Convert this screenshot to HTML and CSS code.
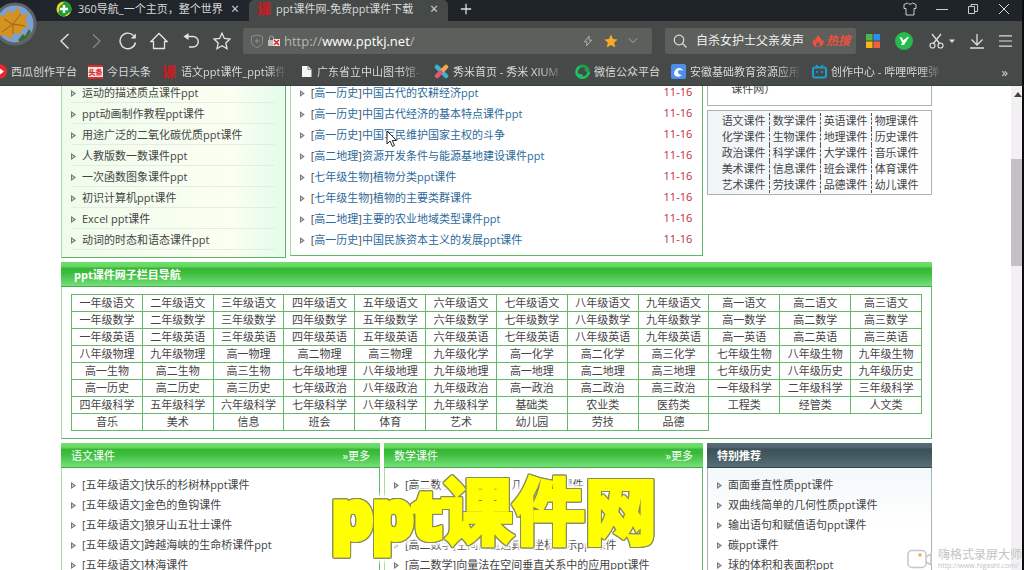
FILE: index.html
```html
<!DOCTYPE html>
<html lang="zh-CN">
<head>
<meta charset="utf-8">
<title>ppt课件网-免费ppt课件下载</title>
<link rel="stylesheet" href="styles.css">
</head>
<body>
<header class="chrome">
  <div class="avatar">
    <svg viewBox="0 0 44 44" width="44" height="44"><circle cx="22" cy="22" r="20" fill="#7d9fd4" stroke="#5d6468" stroke-width="3"/><path d="M25 38l5-6 2 2 4-7 2 3c-2 5-6 8-11 10z" fill="#3f6b33"/><path d="M7 13l5 1 3-6 5 3 5-6 3 8 7-1-3 7 4 5-6 2-2 6-7-1-3 6-5-3-8-1 2-6-5-3 4-4z" fill="#d29322"/><path d="M9 30l11-8 8-10M20 22l12 2M19 22l-8-5M20 22l0 10" stroke="#9a6414" stroke-width="1" fill="none"/></svg>
  </div>
  <div class="tabs">
    <div class="tab">
      <svg viewBox="0 0 16 16" width="16" height="16"><circle cx="8" cy="8" r="7.5" fill="#f4d820"/><path d="M8 .5a7.500 7.500 0 0 1 7 10L8 15.500A7.500 7.500 0 0 1 2 12z" fill="#1d9c3a"/><circle cx="8" cy="8" r="5" fill="#229b3a"/><path d="M8 4v8M4 8h8" stroke="#fff" stroke-width="2.400"/></svg>
      <span class="tab-name">360导航_一个主页，整个世界</span><button class="close" aria-label="关闭">×</button>
    </div>
    <div class="tab active">
      <b class="ke">课</b>
      <span class="tab-name">ppt课件网-免费ppt课件下载</span><button class="close" aria-label="关闭">×</button>
    </div>
    <button class="ico" aria-label="新标签"><svg viewBox="0 0 14 14" width="12" height="12"><path d="M7 1v12M1 7h12" stroke="#ddd" stroke-width="1.500"/></svg></button>
    <div class="window-buttons">
      <button class="ico" aria-label="皮肤"><svg viewBox="0 0 14 14" width="14" height="14"><path d="M1 2.500L4.500 1c1 1.500 4 1.500 5 0L13 2.500v4h-2V13H3V6.500H1z" fill="none" stroke="#ccc"/></svg></button>
      <button class="ico" aria-label="最小化"><svg viewBox="0 0 12 12" width="12" height="12"><path d="M0 6.500h12" stroke="#ccc"/></svg></button>
      <button class="ico" aria-label="还原"><svg viewBox="0 0 12 12" width="12" height="12"><path d="M1.500 3.500h6v7h-6zM4 3.500v-2h6.500v7H8" fill="none" stroke="#ccc"/></svg></button>
      <button class="ico" aria-label="关闭窗口"><svg viewBox="0 0 12 12" width="12" height="12"><path d="M1 1l10 10M11 1L1 11" stroke="#ddd"/></svg></button>
    </div>
  </div>
  <div class="toolbar">
    <div class="nav-buttons">
      <button class="ico" aria-label="后退"><svg viewBox="0 0 18 18" width="18" height="18"><path d="M12.500 2L5 9l7.500 7.500" fill="none" stroke="#e4e4e4" stroke-width="1.400"/></svg></button>
      <button class="ico" aria-label="前进"><svg viewBox="0 0 18 18" width="18" height="18"><path d="M6 2.500L13 9l-7 7" fill="none" stroke="#85898a" stroke-width="1.200"/></svg></button>
      <button class="ico" aria-label="刷新"><svg viewBox="0 0 18 18" width="18" height="18"><path d="M16.500 10.500A7.800 7.800 0 1 1 14.500 3.500" fill="none" stroke="#e4e4e4" stroke-width="1.400"/><path d="M16.800 1.500v5h-5z" fill="#e4e4e4"/></svg></button>
      <button class="ico" aria-label="主页"><svg viewBox="0 0 18 18" width="18" height="18"><path d="M1 9.500L9 1.500l8 8h-2.500v7h-11v-7z" fill="none" stroke="#e4e4e4" stroke-width="1.300"/></svg></button>
      <button class="ico" aria-label="恢复"><svg viewBox="0 0 18 18" width="18" height="18"><path d="M4 4.500h7a5 5 0 0 1 0 10.500H7" fill="none" stroke="#e4e4e4" stroke-width="1.400"/><path d="M1.500 4.500l5-3.500v7z" fill="#e4e4e4"/></svg></button>
      <button class="ico" aria-label="收藏"><svg viewBox="0 0 18 18" width="18" height="18"><path d="M9 1.200l2.400 5.300 5.600.6-4.200 3.900 1.200 5.700L9 13.800l-5 2.900 1.200-5.700L1 7.100l5.600-.6z" fill="none" stroke="#e4e4e4" stroke-width="1.300"/></svg></button>
    </div>
    <div class="url">
      <svg viewBox="0 0 14 14" width="14" height="14"><path d="M7 1l5.500 1.500v5C12.500 11 9 13 7 13.500 5 13 1.500 11 1.500 7.500v-5z" fill="none" stroke="#8c908e"/><path d="M7 4.500v5M4.500 7h5" stroke="#8c908e"/></svg>
      <svg viewBox="0 0 14 12" width="14" height="12"><path d="M1 5h7v6H1z" fill="#bbb"/><path d="M2.500 5V3a2 2 0 0 1 4 0v2" fill="none" stroke="#aaa"/><path d="M6 4h7v7H6z" fill="#eee"/><path d="M7 5l5 5M12 5l-5 5" stroke="#d22" stroke-width="1.500"/></svg>
      <span class="address">http://<b>www.pptkj.net</b>/</span>
      <svg viewBox="0 0 12 14" width="10" height="12"><path d="M7.500 1L1.500 8H5l-1 5 6.500-7H7z" fill="none" stroke="#bbb"/></svg>
      <svg class="gold" viewBox="0 0 14 14" width="14" height="14"><path d="M7 .5l2 4.400 4.700.5-3.500 3.200 1 4.800L7 11l-4.200 2.400 1-4.800L.3 5.400 5 4.900z" fill="#f9ab25"/></svg>
      <svg viewBox="0 0 12 8" width="10" height="7"><path d="M1 1.500l5 5 5-5" fill="none" stroke="#aaa" stroke-width="1.200"/></svg>
    </div>
    <div class="search">
      <svg viewBox="0 0 14 14" width="14" height="14"><circle cx="6" cy="6" r="4.800" fill="none" stroke="#ddd" stroke-width="1.200"/><path d="M9.500 9.500L13.500 13.500" stroke="#ddd" stroke-width="1.200"/></svg>
      <span class="query">自杀女护士父亲发声</span>
      <svg viewBox="0 0 12 13" width="12" height="13"><path d="M6 0c.5 3 4 4 3.800 7L11 5.500c2 4-1 7.500-5 7.500C1 13-.5 9 1.500 5.500L3 7C3 4 6 3 6 0z" fill="#f0503f"/><path d="M6 7c0 2-2 2-2 4s4 2 4 0-2-2-2-4z" fill="#5c5f5b"/></svg>
      <span class="hot">热搜</span>
    </div>
    <div class="tools">
      <button class="ico" aria-label="应用"><svg viewBox="0 0 14 14" width="14" height="14"><path d="M0 0h6.500v6.500H0z" fill="#4fb848"/><path d="M7.500 0H14v6.500H7.500z" fill="#2e8ded"/><path d="M0 7.500h6.500V14H0z" fill="#fbb416"/><path d="M7.500 7.500H14V14H7.500z" fill="#f2603a"/></svg></button>
      <button class="ico" aria-label="插件"><svg viewBox="0 0 18 18" width="18" height="18"><circle cx="9" cy="9" r="9" fill="#27bb4b"/><path d="M4.500 5.500c2-.5 3 0 3.500 3l4.500-3.500h1.500L9 13H6l1.500-2.500C6 10 6 7 4.500 5.500z" fill="#fff"/></svg></button>
      <button class="ico" aria-label="截图"><svg viewBox="0 0 26 16" width="26" height="16"><path d="M3 1l8 10M12 1L4 11" stroke="#ddd" stroke-width="1.300"/><circle cx="3.500" cy="12.500" r="2.500" fill="none" stroke="#ddd" stroke-width="1.200"/><circle cx="11.500" cy="12.500" r="2.500" fill="none" stroke="#ddd" stroke-width="1.200"/><path d="M20 6.500h6l-3 3.500z" fill="#ddd"/></svg></button>
      <button class="ico" aria-label="下载"><svg viewBox="0 0 14 16" width="14" height="16"><path d="M7 1v11M1.500 6.500L7 12l5.500-5.500M0 15h14" fill="none" stroke="#ddd" stroke-width="1.300"/></svg></button>
      <button class="ico" aria-label="菜单"><svg viewBox="0 0 14 14" width="13" height="14"><path d="M0 1.500h14M0 7h14M0 12.500h14" stroke="#ddd" stroke-width="1.200"/></svg></button>
    </div>
  </div>
  <nav class="bookmarks">
    <a href="#" class="first"><svg viewBox="0 0 15 15" width="15" height="15"><circle cx="7.500" cy="7.500" r="7.500" fill="#e8262d"/><path d="M8 4.500l4 3-4 3z" fill="#fff"/></svg><span>西瓜创作平台</span></a>
    <a href="#"><i class="toutiao">头条</i><span>今日头条</span></a>
    <a href="#"><b class="ke">课</b><span class="cut narrow">语文ppt课件_ppt课件</span></a>
    <a href="#"><svg viewBox="0 0 15 15" width="15" height="15"><path d="M4 2h6l3.500 3.500V13H4z" fill="#f5f5f5"/><path d="M10 2v3.500h3.500" fill="none" stroke="#888"/></svg><span class="cut narrow">广东省立中山图书馆-</span></a>
    <a href="#"><svg viewBox="0 0 15 15" width="15" height="15"><path d="M3 3l9 9" stroke="#35b6c9" stroke-width="4.500" stroke-linecap="round"/><path d="M12 3l-3.500 3.500" stroke="#f2a54a" stroke-width="4.500" stroke-linecap="round"/><path d="M6.500 8.500L3 12" stroke="#e85577" stroke-width="4.500" stroke-linecap="round"/></svg><span class="cut">秀米首页 - 秀米 XIUM</span></a>
    <a href="#"><svg viewBox="0 0 15 15" width="15" height="15"><path d="M2.500 11A6 6 0 0 1 5 2.500" fill="none" stroke="#1fc05f" stroke-width="2.600"/><path d="M5 2.500A6 6 0 0 1 13.500 8L10 5" fill="none" stroke="#16a34c" stroke-width="2.600"/><path d="M13.500 8A6 6 0 0 1 2.500 11l5 .5" fill="none" stroke="#1fc05f" stroke-width="2.600"/></svg><span>微信公众平台</span></a>
    <a href="#"><svg viewBox="0 0 15 15" width="15" height="15"><rect width="15" height="15" rx="2" fill="#4a90ea"/><path d="M3 9c1-5 7-7 9-2-3-2-5-1-5 1s2 3 4 3c-3 3-8 2-8-2z" fill="#fff"/></svg><span class="cut">安徽基础教育资源应用</span></a>
    <a href="#"><svg viewBox="0 0 15 15" width="15" height="15"><path d="M4 1l2 2M11 1L9 3" stroke="#1d9fd0" stroke-width="1.500"/><rect x="1" y="3.500" width="13" height="10" rx="2" fill="none" stroke="#1d9fd0" stroke-width="2"/><path d="M5 7v2M10 7v2" stroke="#1d9fd0" stroke-width="1.600"/></svg><span class="cut">创作中心 - 哔哩哔哩弹</span></a>
    <span class="more">»</span>
  </nav>
</header>

<div class="viewport">
  <main class="page">
    <section class="row top">
      <ul class="list panel tint">
        <li>运动的描述质点课件ppt</li>
        <li>ppt动画制作教程ppt课件</li>
        <li>用途广泛的二氧化碳优质ppt课件</li>
        <li>人教版数一数课件ppt</li>
        <li>一次函数图象课件ppt</li>
        <li>初识计算机ppt课件</li>
        <li>Excel ppt课件</li>
        <li>动词的时态和语态课件ppt</li>
      </ul>
      <ul class="list panel news">
        <li><span>[<a href="#">高一历史</a>]<a href="#">中国古代的农耕经济ppt</a></span><time>11-16</time></li>
        <li><span>[<a href="#">高一历史</a>]<a href="#">中国古代经济的基本特点课件ppt</a></span><time>11-16</time></li>
        <li><span>[<a href="#">高一历史</a>]<a href="#">中国军民维护国家主权的斗争</a></span><time>11-16</time></li>
        <li><span>[<a href="#">高二地理</a>]<a href="#">资源开发条件与能源基地建设课件ppt</a></span><time>11-16</time></li>
        <li><span>[<a href="#">七年级生物</a>]<a href="#">植物分类ppt课件</a></span><time>11-16</time></li>
        <li><span>[<a href="#">七年级生物</a>]<a href="#">植物的主要类群课件</a></span><time>11-16</time></li>
        <li><span>[<a href="#">高二地理</a>]<a href="#">主要的农业地域类型课件ppt</a></span><time>11-16</time></li>
        <li><span>[<a href="#">高一历史</a>]<a href="#">中国民族资本主义的发展ppt课件</a></span><time>11-16</time></li>
      </ul>
      <div class="side">
        <div class="notice">课件网）</div>
        <div class="subjects">
          <a href="#">语文课件</a><a href="#">数学课件</a><a href="#">英语课件</a><a href="#">物理课件</a>
          <a href="#">化学课件</a><a href="#">生物课件</a><a href="#">地理课件</a><a href="#">历史课件</a>
          <a href="#">政治课件</a><a href="#">科学课件</a><a href="#">大学课件</a><a href="#">音乐课件</a>
          <a href="#">美术课件</a><a href="#">信息课件</a><a href="#">班会课件</a><a href="#">体育课件</a>
          <a href="#">艺术课件</a><a href="#">劳技课件</a><a href="#">品德课件</a><a href="#">幼儿课件</a>
        </div>
      </div>
    </section>

    <section class="panel">
      <h2 class="head strong">ppt课件网子栏目导航</h2>
      <div class="grid-wrap">
        <table class="columns">
          <tr><td>一年级语文</td><td>二年级语文</td><td>三年级语文</td><td>四年级语文</td><td>五年级语文</td><td>六年级语文</td><td>七年级语文</td><td>八年级语文</td><td>九年级语文</td><td>高一语文</td><td>高二语文</td><td>高三语文</td></tr>
          <tr><td>一年级数学</td><td>二年级数学</td><td>三年级数学</td><td>四年级数学</td><td>五年级数学</td><td>六年级数学</td><td>七年级数学</td><td>八年级数学</td><td>九年级数学</td><td>高一数学</td><td>高二数学</td><td>高三数学</td></tr>
          <tr><td>一年级英语</td><td>二年级英语</td><td>三年级英语</td><td>四年级英语</td><td>五年级英语</td><td>六年级英语</td><td>七年级英语</td><td>八年级英语</td><td>九年级英语</td><td>高一英语</td><td>高二英语</td><td>高三英语</td></tr>
          <tr><td>八年级物理</td><td>九年级物理</td><td>高一物理</td><td>高二物理</td><td>高三物理</td><td>九年级化学</td><td>高一化学</td><td>高二化学</td><td>高三化学</td><td>七年级生物</td><td>八年级生物</td><td>九年级生物</td></tr>
          <tr><td>高一生物</td><td>高二生物</td><td>高三生物</td><td>七年级地理</td><td>八年级地理</td><td>九年级地理</td><td>高一地理</td><td>高二地理</td><td>高三地理</td><td>七年级历史</td><td>八年级历史</td><td>九年级历史</td></tr>
          <tr><td>高一历史</td><td>高二历史</td><td>高三历史</td><td>七年级政治</td><td>八年级政治</td><td>九年级政治</td><td>高一政治</td><td>高二政治</td><td>高三政治</td><td>一年级科学</td><td>二年级科学</td><td>三年级科学</td></tr>
          <tr><td>四年级科学</td><td>五年级科学</td><td>六年级科学</td><td>七年级科学</td><td>八年级科学</td><td>九年级科学</td><td>基础类</td><td>农业类</td><td>医药类</td><td>工程类</td><td>经管类</td><td>人文类</td></tr>
          <tr><td>音乐</td><td>美术</td><td>信息</td><td>班会</td><td>体育</td><td>艺术</td><td>幼儿园</td><td>劳技</td><td>品德</td></tr>
        </table>
      </div>
    </section>

    <section class="row bottom">
      <div class="panel">
        <h2 class="head">语文课件<a href="#">»更多</a></h2>
        <ul class="list compact">
          <li>[五年级语文]快乐的杉树林ppt课件</li>
          <li>[五年级语文]金色的鱼钩课件</li>
          <li>[五年级语文]狼牙山五壮士课件</li>
          <li>[五年级语文]跨越海峡的生命桥课件ppt</li>
          <li>[五年级语文]林海课件</li>
        </ul>
      </div>
      <div class="panel">
        <h2 class="head">数学课件<a href="#">»更多</a></h2>
        <ul class="list compact">
          <li>[高二数学]空间的简单几何体ppt课件</li>
          <li></li>
          <li></li>
          <li>[高二数学]空间向量运算的坐标表示ppt课件</li>
          <li>[高二数学]向量法在空间垂直关系中的应用ppt课件</li>
        </ul>
      </div>
      <div class="panel special">
        <h2 class="head strong">特别推荐</h2>
        <ul class="list compact">
          <li>面面垂直性质ppt课件</li>
          <li>双曲线简单的几何性质ppt课件</li>
          <li>输出语句和赋值语句ppt课件</li>
          <li>碳ppt课件</li>
          <li>球的体积和表面积ppt</li>
        </ul>
      </div>
    </section>
  </main>
  <div class="scrollbar"><span class="arrow"></span><span class="thumb"></span></div>
</div>

<svg class="cursor" viewBox="0 0 12 18" width="12" height="18"><path d="M1 1v13l3-3 2.500 5.500 2-1L6.300 10.500H10.500z" fill="#fff" stroke="#222"/></svg>
<div class="caption"><span class="latin">ppt</span>课件网</div>
<div class="watermark">
  <svg viewBox="0 0 26 20" width="26" height="20"><rect x="1" y="1.500" width="18" height="17" rx="4" fill="#fff" stroke="#c6c6c6" stroke-width="1.500"/><path d="M19 8l5-3v11l-5-3" fill="none" stroke="#c6c6c6" stroke-width="1.500"/><circle cx="13" cy="6" r="1.700" fill="#e3b34c"/></svg>
  <div><div class="brand">嗨格式录屏大师</div><div class="site">http://www.higashi.com/</div></div>
</div>
</body>
</html>
```

FILE: styles.css
```css
* { box-sizing: border-box; }
body {
  margin: 0;
  height: 100vh;
  overflow: hidden;
  display: flex;
  flex-direction: column;
  position: relative;
  background: #fff;
  color: #444;
  font: 11px/16px "Open Sans", "Noto Sans CJK SC", sans-serif;
}
a { color: inherit; text-decoration: none; }
button { font: inherit; color: inherit; background: none; border: 0; padding: 0; }
ul, h2 { margin: 0; padding: 0; list-style: none; font-size: 11px; font-weight: 400; }
svg { display: block; flex: none; }
.ico { display: flex; align-items: center; justify-content: center; }

/* browser frame */
.chrome {
  position: relative;
  flex: none;
  background: #454a49;
  color: #d8dad9;
  border-right: 2px solid #0c0c0c;
  border-bottom: 1px solid #3a3e3d;
}
.avatar { position: absolute; left: -7px; top: 2px; z-index: 2; }
.tabs { display: flex; align-items: center; height: 21px; padding-left: 36px; background: #1f2428; }
.tab { display: flex; align-items: center; width: 213px; height: 21px; padding: 0 10px 4px 20px; gap: 6px; background: #20252c; border-radius: 0 0 6px 0; }
.tab.active { width: 199px; padding: 0 10px 4px 8px; gap: 4px; margin-right: 12px; background: #454a49; border-radius: 5px 5px 0 0; }
.tab-name { flex: 1; white-space: nowrap; }
.close { font-size: 14px; line-height: 14px; }
.ke { flex: none; width: 15px; font-size: 14px; line-height: 15px; font-weight: 900; color: #c31f22; }
.tabs > .ico { height: 21px; padding-bottom: 4px; }
.window-buttons { display: flex; align-items: center; gap: 19px; margin-left: auto; padding: 0 12px 4px 0; }
.toolbar { display: flex; align-items: center; height: 39px; padding: 0 10px 0 56px; }
.nav-buttons { display: flex; flex: none; justify-content: space-between; width: 175px; margin-right: 12px; }
.url { display: flex; align-items: center; flex: 1; height: 26px; padding: 0 14px 0 7px; gap: 3px; margin-right: 13px; background: #5c5f5b; border-radius: 2px; }
.address { flex: 1; font-size: 13px; color: #b5b8b6; }
.address b { font-weight: 400; color: #fff; }
.gold { margin: 0 7px 0 8px; }
.search { display: flex; align-items: center; width: 191px; height: 26px; padding: 0 6px 0 8px; background: #5c5f5b; border-radius: 2px; }
.query { flex: 1; margin-left: 9px; font-size: 12px; color: #f2f2f2; white-space: nowrap; }
.hot { margin-left: 2px; font-size: 12px; font-weight: 700; font-style: italic; color: #f0503f; }
.tools { display: flex; flex: none; align-items: center; justify-content: space-between; width: 146px; margin-left: 10px; }
.bookmarks { display: flex; align-items: center; gap: 11px; height: 25px; padding: 0 14px 2px 0; overflow: hidden; }
.bookmarks a { display: flex; flex: none; align-items: center; gap: 4px; white-space: nowrap; }
.bookmarks .first { margin-left: -8px; }
.toutiao { width: 15px; height: 14px; background: #f3e4e4; color: #e02929; font: 900 7px/10px "Noto Sans CJK SC", sans-serif; text-align: center; border-top: 2px solid #e02929; border-bottom: 2px solid #e02929; }
.cut { width: 111px; mask-image: linear-gradient(90deg, #000 80%, transparent); }
.cut.narrow { width: 106px; }
.more { margin-left: auto; font-size: 13px; }

/* document area */
.viewport { flex: 1; min-height: 0; display: flex; overflow: hidden; border-right: 2px solid #0c0c0c; }
.page { flex: 1; min-width: 0; margin-top: -4px; padding: 0 79px 0 61px; }
.scrollbar { flex: none; width: 11px; background: #f3f0f3; }
.arrow { display: block; margin: 6px 2px 62px 3px; border: 4px solid transparent; border-top: 0; border-bottom: 5px solid #444; height: 5px; width: 8px; }
.thumb { display: block; height: 107px; background: #c3c1c3; }

.row { display: grid; gap: 4px; }
.top { grid-template-columns: 225fr 414fr 225fr; align-items: start; margin-bottom: 4px; }
.bottom { grid-template-columns: 319fr 319fr 225fr; margin-top: 4px; }
.panel { border: 1px solid #62b566; border-left-color: #a5dba5; }
.list li { position: relative; display: flex; justify-content: space-between; height: 21px; margin: 0 10px 0 9px; padding-left: 11px; line-height: 22px; white-space: nowrap; }
.list li:not(:empty)::before { content: ""; position: absolute; left: 0; top: 8px; width: 5px; height: 7px; background: #777; clip-path: polygon(0 0, 100% 50%, 0 100%); }
.list li:not(:empty)::after { content: ""; position: absolute; left: 1px; top: 10px; width: 2px; height: 3px; background: #ddd; clip-path: polygon(0 0, 100% 50%, 0 100%); }
.tint { border-top: 0; padding-bottom: 7px; background: linear-gradient(90deg, #effcec, #fbfff2 75%, #e4fcea); }
.tint li { border-bottom: 1px solid #e2eee2; }
.news { border-top: 0; padding-bottom: 5px; }
.news a { color: #2c6a9b; }
.news time { color: #c4283a; line-height: 19px; }
.side { display: grid; gap: 4px; }
.notice { height: 24px; padding-left: 23px; line-height: 14px; border: 1px solid #aab5b2; border-top: 0; }
.subjects { display: grid; grid-template-columns: repeat(4, 51px); justify-content: center; padding: 2px 0 1px; background: linear-gradient(90deg, #f0f5f8, #fff); border: 1px solid #aab5b2; }
.subjects a { padding-left: 3px; border-left: 1px dashed #555; }
.subjects a:nth-child(4n+1) { border-left-color: transparent; }

.head { display: flex; justify-content: space-between; height: 25px; margin: -1px -1px 0; padding: 0 10px; line-height: 26px; color: #fff; border-bottom: 1px solid #45a84a; background: linear-gradient(#6fdf6b 0, #66d862 18%, #36b834 27%, #3cbc3c 45%, #74e079 100%); }
.strong { padding-left: 13px; font-weight: 700; }
.grid-wrap { padding: 7px 9px; }
.columns { width: 100%; border-collapse: collapse; table-layout: fixed; }
.columns td { height: 17px; padding: 0; line-height: 16px; text-align: center; border: 1px solid #66b968; }
.compact { padding-top: 6px; }
.compact li { height: 20px; }
.special { border-color: #a8b4b8; background: linear-gradient(#eef5f6, #fff 80px); }
.special .head { padding-left: 10px; border-bottom-color: #32454c; background: linear-gradient(#566b74 0, #526770 18%, #3c5158 25%, #435960 50%, #586f77 100%); }

/* overlays */
.cursor { position: absolute; left: 386px; top: 130px; }
.caption {
  position: absolute;
  left: 332px;
  top: 458px;
  font: 700 72px/104px "Open Sans", "Noto Sans CJK SC", sans-serif;
  white-space: nowrap;
  color: #ff0;
  -webkit-text-stroke: 4px #ff0;
  filter: drop-shadow(1px 0 #8b8b62) drop-shadow(-1px 0 #8b8b62) drop-shadow(0 1px #8b8b62) drop-shadow(0 -1px #8b8b62) drop-shadow(0 0 2px #fff) drop-shadow(0 0 2px #fff) drop-shadow(0 0 1px #fff);
}
.latin { font-size: 64px; -webkit-text-stroke-width: 7px; }
.watermark { position: absolute; right: 2px; bottom: 0; display: flex; align-items: center; gap: 5px; color: #c4c4c4; }
.brand { font-size: 12px; line-height: 13px; }
.site { font-size: 7px; line-height: 9px; }
```
